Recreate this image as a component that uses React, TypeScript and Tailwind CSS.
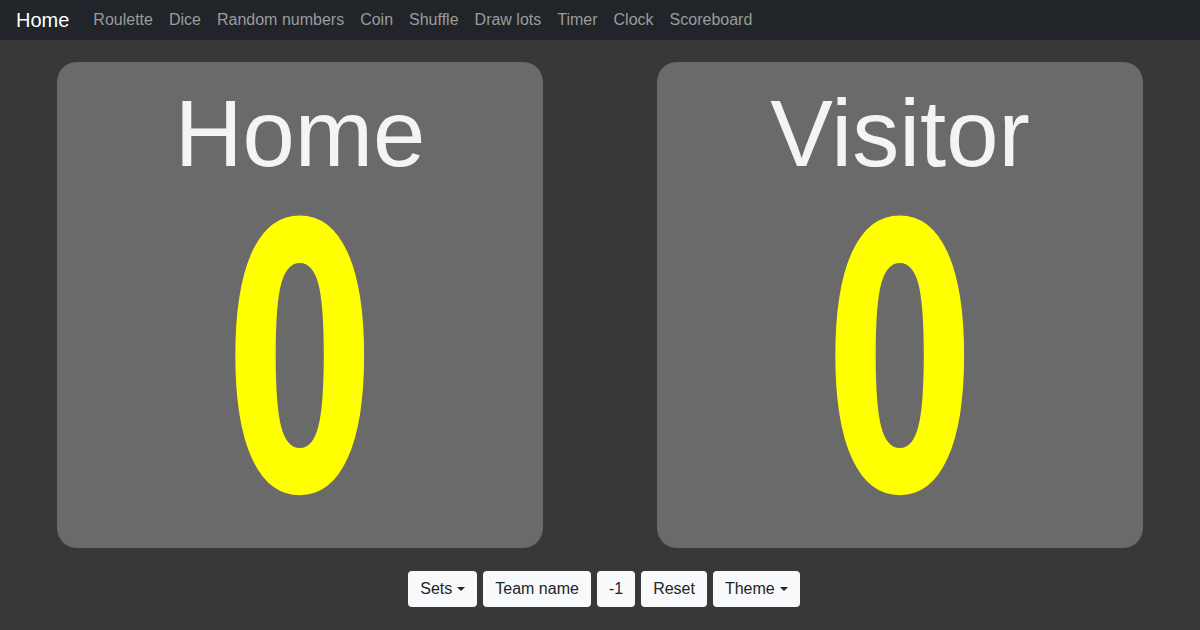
import { useState } from 'react';

const links = ['Roulette', 'Dice', 'Random numbers', 'Coin', 'Shuffle', 'Draw lots', 'Timer', 'Clock', 'Scoreboard'];

function Caret() {
  return <span className="ml-[5px] inline-block h-0 w-0 border-x-4 border-t-4 border-x-transparent border-t-current align-middle" />;
}

function TeamCard({ name, score }: { name: string; score: number }) {
  return (
    <div className="flex h-[486px] w-[486px] flex-col items-center rounded-[20px] bg-[#6a6a6a]">
      <div className="mt-[25px] text-[94px] leading-none text-[#f4f4f4]">{name}</div>
      <div
        className="mt-[33px] origin-top scale-x-[0.58] text-[370px] font-bold leading-[0.8] text-[#ffff00]"
        style={{ fontFamily: '"DejaVu Sans", sans-serif' }}
      >
        {score}
      </div>
    </div>
  );
}

export default function App() {
  const [home, setHome] = useState(0);
  const [visitor, setVisitor] = useState(0);

  return (
    <div className="flex min-h-[630px] flex-col bg-[#383838] font-['Liberation_Sans',Arial,sans-serif]">
      {/* Navbar */}
      <nav className="flex h-[40px] items-center bg-[#212529] px-4">
        <a className="mr-4 text-[20px] leading-none text-white">Home</a>
        <ul className="flex">
          {links.map((l) => (
            <li key={l} className="px-2 text-[16px] leading-none text-[#9a9b9d]">
              {l}
            </li>
          ))}
        </ul>
      </nav>

      {/* Scoreboard */}
      <div className="grid grid-cols-2 pt-[22px]">
        <div className="flex justify-center" onClick={() => setHome(home + 1)}>
          <TeamCard name="Home" score={home} />
        </div>
        <div className="flex justify-center" onClick={() => setVisitor(visitor + 1)}>
          <TeamCard name="Visitor" score={visitor} />
        </div>
      </div>

      {/* Controls */}
      <div className="mt-[23px] flex justify-center gap-[6px] pl-[8px]">
        <button className="flex h-[36px] items-center rounded-[4px] bg-[#f8f9fa] px-3 text-[16px] text-[#212529]">
          Sets
          <Caret />
        </button>
        <button className="h-[36px] rounded-[4px] bg-[#f8f9fa] px-3 text-[16px] text-[#212529]">Team name</button>
        <button
          className="h-[36px] rounded-[4px] bg-[#f8f9fa] px-3 text-[16px] text-[#212529]"
          onClick={() => setHome(Math.max(0, home - 1))}
        >
          -1
        </button>
        <button
          className="h-[36px] rounded-[4px] bg-[#f8f9fa] px-3 text-[16px] text-[#212529]"
          onClick={() => {
            setHome(0);
            setVisitor(0);
          }}
        >
          Reset
        </button>
        <button className="flex h-[36px] items-center rounded-[4px] bg-[#f8f9fa] px-3 text-[16px] text-[#212529]">
          Theme
          <Caret />
        </button>
      </div>
    </div>
  );
}
